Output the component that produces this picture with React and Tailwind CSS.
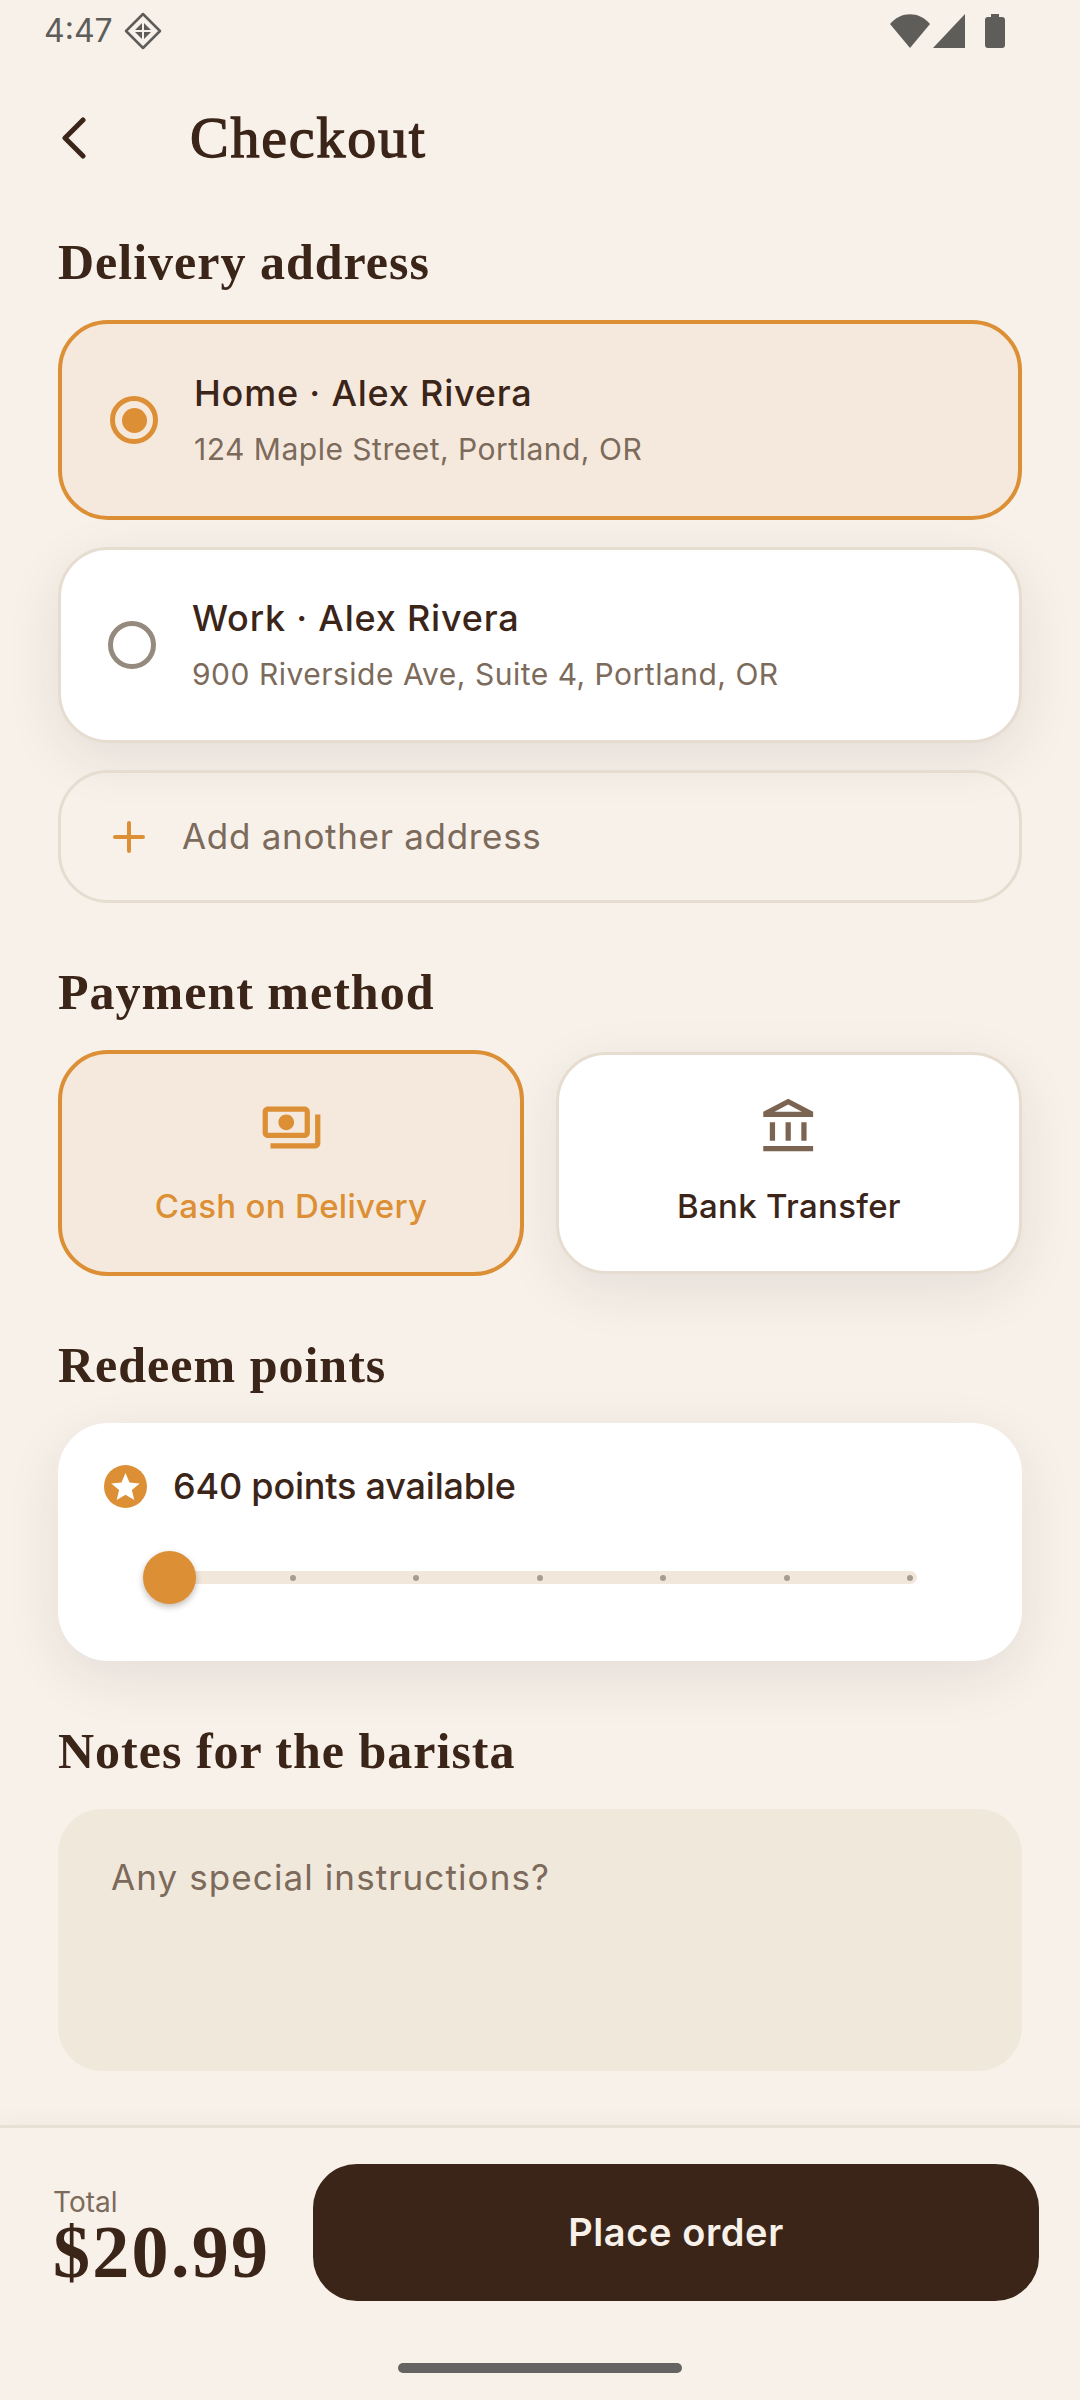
const serif = "font-['Liberation_Serif',serif]"

function StatusBar() {
  return (
    <div className="h-[62px] flex items-center justify-between pl-[44px] pr-[75px] text-[#5f5d5a]">
      <div className="flex items-center gap-[11px]">
        <span className="text-[32px] leading-none">4:47</span>
        <svg width="38" height="38" viewBox="0 0 38 38" fill="none">
          <path d="M19 2 36 19 19 36 2 19Z" stroke="#5f5d5a" strokeWidth="2.5" strokeLinejoin="round" />
          <path d="M11 18 18 11V18ZM20 11 27 18H20ZM20 20H27L20 27ZM18 20V27L11 20Z" fill="#5f5d5a" />
        </svg>
      </div>
      <div className="flex items-center">
        <svg width="40" height="34" viewBox="0 0 40 34" fill="#5f5d5a">
          <path d="M0 10C11-3 29-3 40 10L20 34Z" />
        </svg>
        <svg className="ml-[3px]" width="33" height="34" viewBox="0 0 33 34" fill="#5f5d5a">
          <path d="M32 0V34H0Z" />
        </svg>
        <svg className="ml-[19px]" width="20" height="34" viewBox="0 0 20 34" fill="#5f5d5a">
          <path d="M6 0H14V3H17C19 3 20 4 20 6V31C20 33 19 34 17 34H3C1 34 0 33 0 31V6C0 4 1 3 3 3H6Z" />
        </svg>
      </div>
    </div>
  )
}

function SectionTitle({ children, className }) {
  return (
    <h2 className={`${serif} text-[50px] leading-[56px] tracking-[1px] font-bold text-[#3b2418] ${className}`}>{children}</h2>
  )
}

function AddressCard({ selected, title, address }) {
  return (
    <div
      className={
        selected
          ? "h-[200px] rounded-[50px] border-[4px] border-[#dc8f34] bg-[#f5e9dd] flex items-center pl-[48px]"
          : "h-[196px] rounded-[50px] border-[3px] border-[#e6dcd0] bg-white flex items-center pl-[47px] shadow-[0_16px_56px_rgba(60,36,24,0.09)]"
      }
    >
      <div className={selected ? "w-[48px] h-[48px] rounded-full border-[5px] border-[#dc8f34] flex items-center justify-center" : "w-[48px] h-[48px] rounded-full border-[5px] border-[#958a7e]"}>
        {selected && <div className="w-[25px] h-[25px] rounded-full bg-[#dc8f34]" />}
      </div>
      <div className="ml-[36px] pb-[2px]">
        <div className="text-[36px] leading-[48px] font-medium tracking-[0.8px] text-[#3b2418]">{title}</div>
        <div className="mt-[12px] text-[30px] leading-[40px] tracking-[0.5px] text-[#7c6a5b]">{address}</div>
      </div>
    </div>
  )
}

function Tick() {
  return <div className="w-[6px] h-[6px] rounded-full bg-[#a89c90]" />
}

function PayCard({ selected, label, children }) {
  return (
    <div
      className={
        selected
          ? "w-[466px] h-[226px] rounded-[50px] border-[4px] border-[#dc8f34] bg-[#f5e9dd] flex flex-col items-center pt-[42px]"
          : "w-[466px] h-[222px] rounded-[50px] border-[3px] border-[#e6dcd0] bg-white flex flex-col items-center pt-[41px] shadow-[0_16px_56px_rgba(60,36,24,0.09)]"
      }
    >
      <div className="h-[63px]">{children}</div>
      <div className={`mt-[25px] text-[33px] leading-[44px] font-medium tracking-[0.3px] ${selected ? "text-[#dc8f34]" : "text-[#3b2418]"}`}>{label}</div>
    </div>
  )
}

export default function App() {
  return (
    <div className="w-[1080px] h-[2400px] bg-[#f7f1ea] flex flex-col font-['Inter',sans-serif] overflow-hidden">
      <StatusBar />

      <div className="h-[152px] flex items-center pl-[62px]">
        <svg width="24" height="42" viewBox="0 0 24 42" fill="none">
          <path d="M21 3 3 21 21 39" stroke="#3b2418" strokeWidth="5" strokeLinecap="round" strokeLinejoin="round" />
        </svg>
        <h1 className={`${serif} ml-[104px] text-[58px] leading-none tracking-[1.8px] text-[#3b2418] [-webkit-text-stroke:1.3px_#3b2418]`}>Checkout</h1>
      </div>

      <div className="px-[58px] flex flex-col">
        <SectionTitle className="mt-[20px]">Delivery address</SectionTitle>
        <div className="mt-[30px] flex flex-col gap-[27px]">
          <AddressCard selected title="Home · Alex Rivera" address="124 Maple Street, Portland, OR" />
          <AddressCard title="Work · Alex Rivera" address="900 Riverside Ave, Suite 4, Portland, OR" />
          <div className="h-[133px] rounded-[50px] border-[3px] border-[#e6dcd0] flex items-center pl-[52px]">
            <svg width="32" height="32" viewBox="0 0 32 32" fill="none">
              <path d="M16 2V30M2 16H30" stroke="#dc8f34" strokeWidth="4" strokeLinecap="round" />
            </svg>
            <span className="ml-[37px] text-[35px] tracking-[0.7px] text-[#7c6a5b]">Add another address</span>
          </div>
        </div>

        <SectionTitle className="mt-[61px]">Payment method</SectionTitle>
        <div className="mt-[30px] flex items-center justify-between">
          <PayCard selected label="Cash on Delivery">
            <svg width="63" height="63" viewBox="0 0 24 24" fill="#dc8f34">
              <path d="M19 14V6c0-1.1-.9-2-2-2H3c-1.1 0-2 .9-2 2v8c0 1.1.9 2 2 2h14c1.1 0 2-.9 2-2zm-2 0H3V6h14v8zm-7-7c-1.66 0-3 1.34-3 3s1.34 3 3 3 3-1.34 3-3-1.34-3-3-3zm13 0v11c0 1.1-.9 2-2 2H4v-2h17V7h2z" />
            </svg>
          </PayCard>
          <PayCard label="Bank Transfer">
            <svg width="63" height="63" viewBox="0 0 24 24" fill="#7c6452">
              <path d="M6.5 10h-2v7h2v-7zm6 0h-2v7h2v-7zm8.5 9H2v2h19v-2zm-2.5-9h-2v7h2v-7zm-7-6.74L16.71 6H6.29l5.21-2.74m0-2.26L2 6v2h19V6l-9.5-5z" />
            </svg>
          </PayCard>
        </div>

        <SectionTitle className="mt-[61px]">Redeem points</SectionTitle>
        <div className="mt-[30px] h-[238px] rounded-[50px] bg-white shadow-[0_16px_56px_rgba(60,36,24,0.09)] pl-[46px] pt-[41px]">
          <div className="flex items-center">
            <svg width="43" height="43" viewBox="0 0 43 43">
              <circle cx="21.5" cy="21.5" r="21.5" fill="#dc8f34" />
              <path d="M21.5 8l4 9.6 10.2.8-7.8 6.7 2.4 10-8.8-5.4-8.8 5.4 2.4-10-7.8-6.7 10.2-.8Z" fill="#fff" />
            </svg>
            <span className="ml-[26px] text-[36px] leading-[44px] font-medium tracking-[-0.2px] text-[#3b2418]">640 points available</span>
          </div>
          <div className="mt-[63px] ml-[39px] w-[774px] h-[13px] rounded-full bg-[#f1e7da] relative flex items-center justify-between pl-[147px] pr-[4px]">
            <div className="absolute left-0 top-[-20px] w-[53px] h-[53px] rounded-full bg-[#dc8f34] shadow-[0_3px_6px_rgba(60,36,24,0.3)]" />
            <Tick /><Tick /><Tick /><Tick /><Tick /><Tick />
          </div>
        </div>

        <SectionTitle className="mt-[62px]">Notes for the barista</SectionTitle>
        <div className="mt-[30px] h-[262px] rounded-[44px] bg-[#f1e8dc] pl-[53px] pt-[46px] text-[35px] leading-[44px] tracking-[1.1px] text-[#7c6a5b]">
          Any special instructions?
        </div>
      </div>

      <div className="mt-auto border-t-[3px] border-[#e8e0d4] h-[275px] flex flex-col shadow-[0_-6px_20px_rgba(60,36,24,0.03)]">
        <div className="flex items-start pl-[53px] pr-[41px] pt-[36px]">
          <div className="w-[260px] pt-[20px]">
            <div className="text-[28px] leading-[36px] text-[#7c6a5b]">Total</div>
            <div className={`${serif} text-[74px] leading-[64px] tracking-[2.3px] font-bold text-[#3b2418]`}>$20.99</div>
          </div>
          <div className="flex-1 h-[137px] rounded-[44px] bg-[#3b2418] flex items-center justify-center text-[38px] font-semibold tracking-[0.6px] text-[#f7f1ea]">
            Place order
          </div>
        </div>
        <div className="mt-auto mb-[27px] mx-auto w-[284px] h-[10px] rounded-full bg-[#666462]" />
      </div>
    </div>
  )
}
